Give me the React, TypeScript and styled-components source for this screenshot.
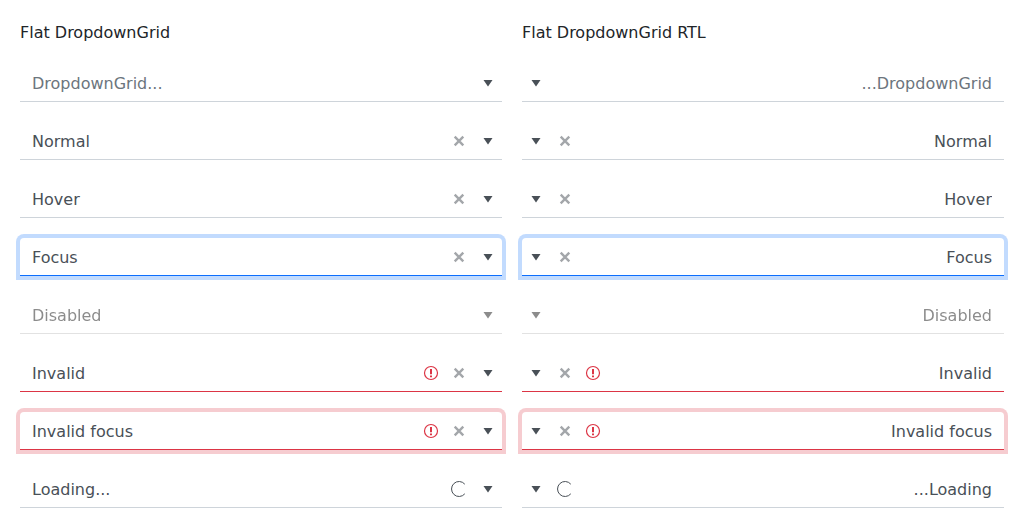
import React, { useId } from "react";
import styled, { createGlobalStyle, css } from "styled-components";

const GlobalStyle = createGlobalStyle`
  *, *::before, *::after { box-sizing: border-box; }
  body {
    margin: 0;
    background: #ffffff;
    color: #212529;
    font-family: "DejaVu Sans", "Noto Sans", sans-serif;
    font-size: 16px;
    line-height: 24px;
  }
`;

type State = "normal" | "focus" | "invalid" | "invalidFocus" | "disabled";

const Page = styled.main`
  display: grid;
  grid-template-columns: 1fr 1fr;
  gap: 20px;
  padding: 20px;
`;

const Column = styled.section`
  display: flex;
  flex-direction: column;
  gap: 20px;
  min-width: 0;
`;

const Title = styled.h2`
  margin: 0;
  padding-top: 2px;
  font-size: 16px;
  font-weight: 400;
  line-height: 22px;
`;

const Picker = styled.div<{ $state: State }>`
  display: flex;
  align-items: stretch;
  border-bottom: 1px solid #ced4da;
  color: #495057;
  background: #ffffff;

  ${({ $state }) =>
    $state === "focus" &&
    css`
      border-color: #0d6efd;
      border-radius: 4px 4px 0 0;
      box-shadow: 0 0 0 4px rgba(13, 110, 253, 0.25);
    `}
  ${({ $state }) =>
    $state === "invalid" &&
    css`
      border-color: #dc3545;
    `}
  ${({ $state }) =>
    $state === "invalidFocus" &&
    css`
      border-color: #dc3545;
      border-radius: 4px 4px 0 0;
      box-shadow: 0 0 0 4px rgba(220, 53, 69, 0.25);
    `}
  ${({ $state }) =>
    $state === "disabled" &&
    css`
      opacity: 0.65;
      filter: grayscale(1);
    `}
`;

const Field = styled.input`
  flex: 1;
  min-width: 0;
  margin: 0;
  padding: 8px 12px 5px;
  border: 0;
  outline: 0;
  background: transparent;
  color: inherit;
  font: inherit;

  &::placeholder {
    color: #6c757d;
    opacity: 1;
  }
`;

const Slot = styled.span<{ $danger?: boolean }>`
  display: flex;
  align-items: center;
  justify-content: center;
  width: 28px;
  padding-top: 1px;
  color: ${({ $danger }) => ($danger ? "#dc3545" : "inherit")};
`;

const IconButton = styled.button<{ $faded?: boolean }>`
  display: flex;
  align-items: center;
  justify-content: center;
  width: 28px;
  padding: 1px 0 0;
  border: 0;
  background: transparent;
  color: inherit;
  opacity: ${({ $faded }) => ($faded ? 0.5 : 1)};
`;

const ToggleButton = styled(IconButton)`
  margin-inline-start: 1px;
`;

const Glyph = styled.svg`
  display: block;
  width: 16px;
  height: 16px;
  fill: currentColor;
`;

const CaretIcon = () => (
  <Glyph viewBox="0 0 16 16" aria-hidden="true">
    <path d="M3.5 5h9L8 11.4z" />
  </Glyph>
);

const ClearIcon = () => (
  <Glyph viewBox="0 0 16 16" aria-hidden="true">
    <path
      d="M3.7 3.7l8.6 8.6M12.3 3.7l-8.6 8.6"
      fill="none"
      stroke="currentColor"
      strokeWidth="2.4"
    />
  </Glyph>
);

const WarningIcon = () => (
  <Glyph viewBox="0 0 16 16" role="img" aria-label="Invalid value">
    <circle
      cx="8"
      cy="8"
      r="6.5"
      fill="none"
      stroke="currentColor"
      strokeWidth="1.2"
    />
    <path d="M7 4h2v5.3H7zM7 10.4h2v1.8H7z" />
  </Glyph>
);

const LoadingIcon = () => (
  <Glyph viewBox="0 0 16 16" role="img" aria-label="Loading">
    <path
      d="M13.8 3.2A7.5 7.5 0 1 0 13.8 12.8"
      fill="none"
      stroke="currentColor"
    />
  </Glyph>
);

interface Item {
  value: string;
  state?: State;
  clearable?: boolean;
  loading?: boolean;
}

const items: Item[] = [
  { value: "" },
  { value: "Normal", clearable: true },
  { value: "Hover", clearable: true },
  { value: "Focus", state: "focus", clearable: true },
  { value: "Disabled", state: "disabled" },
  { value: "Invalid", state: "invalid", clearable: true },
  { value: "Invalid focus", state: "invalidFocus", clearable: true },
  { value: "Loading...", loading: true },
];

function DropdownGrid({ value, state = "normal", clearable, loading }: Item) {
  const id = useId();
  const disabled = state === "disabled";
  const invalid = state === "invalid" || state === "invalidFocus";
  return (
    <Picker $state={state}>
      <Field
        id={id}
        type="text"
        role="combobox"
        aria-label={value || "DropdownGrid"}
        aria-expanded={false}
        aria-invalid={invalid}
        aria-busy={loading}
        autoComplete="off"
        placeholder="DropdownGrid..."
        defaultValue={value}
        disabled={disabled}
      />
      {invalid && (
        <Slot $danger>
          <WarningIcon />
        </Slot>
      )}
      {clearable && (
        <IconButton type="button" aria-label="Clear" $faded>
          <ClearIcon />
        </IconButton>
      )}
      {loading && (
        <Slot>
          <LoadingIcon />
        </Slot>
      )}
      <ToggleButton
        type="button"
        aria-label="Open"
        aria-controls={id}
        disabled={disabled}
      >
        <CaretIcon />
      </ToggleButton>
    </Picker>
  );
}

function Examples({ title, dir }: { title: string; dir: "ltr" | "rtl" }) {
  return (
    <Column>
      <Title>{title}</Title>
      {items.map((item) => (
        <div key={item.value} dir={dir}>
          <DropdownGrid {...item} />
        </div>
      ))}
    </Column>
  );
}

export default function App() {
  return (
    <>
      <GlobalStyle />
      <Page>
        <Examples title="Flat DropdownGrid" dir="ltr" />
        <Examples title="Flat DropdownGrid RTL" dir="rtl" />
      </Page>
    </>
  );
}
